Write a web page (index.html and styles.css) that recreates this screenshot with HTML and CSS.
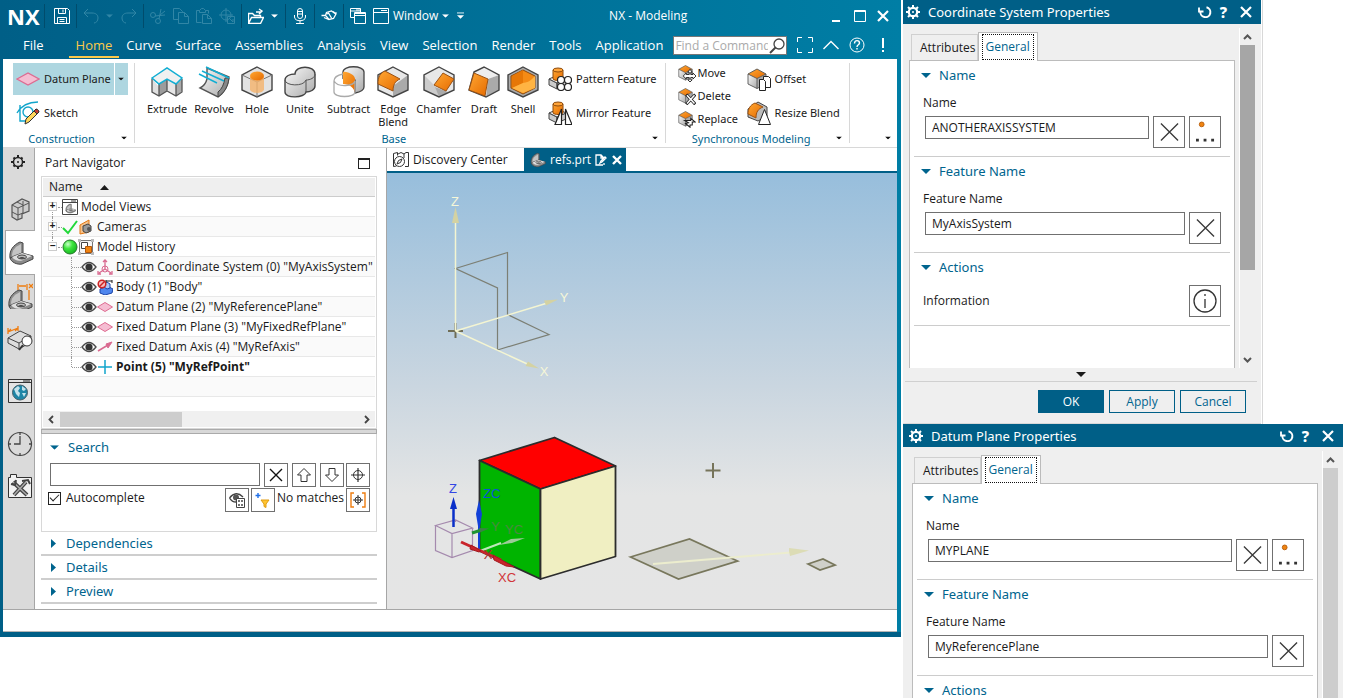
FILE: index.html
```html
<!DOCTYPE html>
<html lang="en">
<head>
<meta charset="utf-8">
<title>NX - Modeling</title>
<link rel="stylesheet" href="styles.css">
</head>
<body>
<svg class="sprite" aria-hidden="true">
  <defs>
    <linearGradient id="steel" x1="0" y1="0" x2="1" y2="1"><stop offset="0" stop-color="#fafafa"/><stop offset="1" stop-color="#a9a9a9"/></linearGradient>
    <linearGradient id="orange" x1="0" y1="0" x2="1" y2="1"><stop offset="0" stop-color="#ffa733"/><stop offset="1" stop-color="#e56a00"/></linearGradient>
    <radialGradient id="ball" cx=".35" cy=".3" r=".8"><stop offset="0" stop-color="#c9ffc9"/><stop offset=".4" stop-color="#3ee63e"/><stop offset="1" stop-color="#0fae1c"/></radialGradient>
  </defs>
  <symbol id="gear" viewBox="0 0 14 14"><path d="M7 0v14M0 7h14M2 2l10 10M12 2L2 12" stroke="currentColor" stroke-width="2"/><circle cx="7" cy="7" r="4.200" fill="var(--hub)" stroke="currentColor" stroke-width="2.200"/><circle cx="7" cy="7" r="1" fill="currentColor"/></symbol>
  <symbol id="reset" viewBox="0 0 14 14"><path d="M2.500 6A5 5 0 1 0 8.500 2.200" fill="none" stroke="currentColor" stroke-width="2"/><path d="M1 2.500v4h4.500" fill="none" stroke="currentColor" stroke-width="1.800"/></symbol>
  <symbol id="close" viewBox="0 0 12 12"><path d="M1 1l10 10M11 1L1 11" stroke="currentColor" stroke-width="2.200"/></symbol>
  <symbol id="cross" viewBox="0 0 20 20"><path d="M1 1l18 18M19 1L1 19" stroke="#3a3a3a" stroke-width="1.400"/></symbol>
  <symbol id="down" viewBox="0 0 8 4"><path d="M0 0h8L4 4z" fill="currentColor"/></symbol>
  <symbol id="open" viewBox="0 0 10 5"><path d="M0 0h10L5 5z" fill="currentColor"/></symbol>
  <symbol id="eye" viewBox="0 0 16 12"><path d="M1 6Q8-3 15 6 8 15 1 6z" fill="#fff" stroke="#4a4a4a" stroke-width="1.300"/><circle cx="8" cy="6" r="3.600" fill="#333"/></symbol>
  <symbol id="plane" viewBox="0 0 24 14"><path d="M1 7L12 1l11 6-11 6z" fill="#f5bdd2" stroke="#dd6b91" stroke-width="1.200"/></symbol>
  <symbol id="chev-up" viewBox="0 0 9 6"><path d="M1 5l3.500-3.500L8 5" fill="none" stroke="#555" stroke-width="2"/></symbol>
  <symbol id="chev-down" viewBox="0 0 9 6"><path d="M1 1l3.500 3.500L8 1" fill="none" stroke="#555" stroke-width="2"/></symbol>
  <symbol id="box" viewBox="0 0 24 24"><path d="M1 7l9 4.500v10L1 17z" fill="url(#steel)"/><path d="M19 7l-9 4.500v10l9-4.500z" fill="#aaa"/><path d="M1 7l9-5 9 5-9 4.500z" fill="url(#orange)"/><path d="M1 7v10l9 4.500 9-4.500V7l-9-5zM10 11.500v10M1 7l9 4.500L19 7" fill="none" stroke="#555" stroke-width=".9"/></symbol>
  <symbol id="boss" viewBox="0 0 24 24"><path d="M1 12l8 4v6l-8-4zM9 16l9-4v6l-9 4z" fill="#ccc" stroke="#444"/><path d="M1 12l9-4 8 4-9 4z" fill="#f3f3f3" stroke="#444"/><path d="M5 3v9c2 2 8 2 10 0V3z" fill="url(#orange)" stroke="#8d4a0c"/><ellipse cx="10" cy="3" rx="5" ry="2" fill="#ffa43a" stroke="#8d4a0c"/></symbol>
  <symbol id="bracket" viewBox="0 0 26 24"><path d="M2 17C1 10 5 4 12 1l3 1v11L4 19z" fill="#8d8d8d" stroke="#444"/><path d="M4 15C4 9 7 6 13 3v9z" fill="#c4c4c4"/><path d="M2 17l12-5 11 3v3l-11 5c-5 1-11-2-12-6z" fill="#8a8a8a" stroke="#444"/><path d="M4 16l10-4 10 3-10 4.500c-4 1-8-.5-10-3.500z" fill="#dedede"/><ellipse cx="14" cy="16" rx="4.500" ry="2" fill="#bbb" stroke="#444"/><path d="M11 17q3-2 6 0-3 1.500-6 0z" fill="#444"/></symbol>
  <symbol id="target" viewBox="0 0 16 16"><circle cx="8" cy="8" r="4.500" fill="none" stroke="#333"/><path d="M8 1v14M1 8h14" stroke="#333" stroke-width="1.200"/></symbol>
</svg>

<main class="desktop">
  <section class="app">
    <header class="titlebar">
      <strong class="logo">NX</strong>
      <div class="quick">
        <i class="sep"></i>
        <button class="qb save" aria-label="Save"><svg viewBox="0 0 16 16"><path d="M.5.5h13l2 2v13H.5zM4.500.5v5h7v-5M9 1.500v3M3.500 15.500v-6h9v6M5.500 11.500h5M5.500 13.500h5" /></svg></button>
        <i class="sep"></i>
        <button class="qb off" aria-label="Undo"><svg viewBox="0 0 16 16"><path d="M5 1L1 5l4 4M1 5h8c4 0 6 2 6 5s-2 5-4 5"/></svg></button>
        <button class="qc off" aria-label="Undo list"><svg viewBox="0 0 8 4"><use href="#down"/></svg></button>
        <button class="qb off" aria-label="Redo"><svg viewBox="0 0 16 16"><path d="M11 1l4 4-4 4M15 5H7c-4 0-6 2-6 5s2 5 4 5"/></svg></button>
        <i class="sep"></i>
        <button class="qb off" aria-label="Cut"><svg viewBox="0 0 16 16"><circle cx="3" cy="7" r="2.500"/><circle cx="8" cy="13" r="2.500"/><path d="M5 8l10-1M9 11l2-10M10 7l5-4"/></svg></button>
        <button class="qb off" aria-label="Copy"><svg viewBox="0 0 16 16"><path d="M5.500 11.500h-5V.5h6l3 3v1M5.500 4.500h6l4 4v7h-10zM11.500 4.500v4h4"/></svg></button>
        <button class="qb off" aria-label="Paste"><svg viewBox="0 0 16 16"><path d="M5.500 14.500h-5v-12h3m6 0h3v3M3.500 4.500v-2l2-2h2l2 2v2zM6.500 6.500h5l4 4v5h-9zM11.500 6.500v4h4"/></svg></button>
        <button class="qb off" aria-label="Move object"><svg viewBox="0 0 16 16"><circle cx="7" cy="7" r="5"/><path d="M7 0v14M0 7h14M8.500 8.500h7v7h-7zM10 10l4 4v-3"/></svg></button>
        <i class="sep"></i>
        <button class="qb" aria-label="Open"><svg viewBox="0 0 16 16"><path d="M.5 15.500v-10h4l2 2h6v2M.5 15.500l3-6h12l-3 6zM8 4h5l1-1M11 1l3 2-3 3" stroke-width="1.400"/></svg></button>
        <button class="qc" aria-label="Open list"><svg viewBox="0 0 8 4"><use href="#down"/></svg></button>
        <i class="sep"></i>
        <button class="qb" aria-label="Voice"><svg viewBox="0 0 16 16"><path d="M5.500 3v5a2.500 2.500 0 0 0 5 0V3a2.500 2.500 0 0 0-5 0zM5 3.500h6M5 6h6M2.500 7v2c0 5 11 5 11 0V7M8 12.500v3M4 15.500h8"/></svg></button>
        <i class="sep"></i>
        <button class="qb" aria-label="Touch"><svg viewBox="0 0 16 16"><path d="M.5 7.500h4l1-3 5-1.500 3.500 2.500 1.500-1M5 8l3 3.500 4.500-1L15 6l-3-2.500M3 9.500l4.500 2M7.500 5l3 5M6 6l2-1" stroke-width="1.300"/></svg></button>
        <i class="sep"></i>
        <button class="qb" aria-label="Switch window"><svg viewBox="0 0 16 16"><path d="M4.500 9.500h-4v-9h10v4M.5 3h10M4.500 4.500h11v11h-11zM4.500 7.500h11M5 5.500h10M6 2h4"/></svg></button>
        <button class="qb wide"><svg viewBox="0 0 16 16"><path d="M.5.5h15v15H.5zM.5 4.500h15M8 2.500h6"/></svg>Window</button>
        <button class="qc" aria-label="Window list"><svg viewBox="0 0 8 4"><use href="#down"/></svg></button>
        <button class="qc" aria-label="Customize"><svg viewBox="0 0 8 8" class="tall"><path d="M0 .5h8"/><path d="M0 3h8L4 7z" fill="currentColor" stroke="none"/></svg></button>
      </div>
      <h1 class="title">NX - Modeling</h1>
      <div class="winctl">
        <button aria-label="Minimize"><svg viewBox="0 0 12 12"><path d="M1 11h8" stroke-width="2"/></svg></button>
        <button aria-label="Maximize"><svg viewBox="0 0 12 12"><path d="M.5.5h11v11H.5zM.5 1.500h11"/></svg></button>
        <button aria-label="Close"><svg viewBox="0 0 12 12"><use href="#close"/></svg></button>
      </div>
    </header>

    <nav class="tabs">
      <a class="file" href="#file">File</a><a class="on" href="#home">Home</a><a href="#curve">Curve</a><a href="#surface">Surface</a><a href="#assemblies">Assemblies</a><a href="#analysis">Analysis</a><a href="#view">View</a><a href="#selection">Selection</a><a href="#render">Render</a><a href="#tools">Tools</a><a href="#application">Application</a>
      <div class="find"><input type="text" placeholder="Find a Command" aria-label="Find a Command"><svg viewBox="0 0 16 16"><circle cx="10" cy="6" r="5" fill="none" stroke="#444" stroke-width="1.300"/><path d="M6.500 9.500L1 15" stroke="#444" stroke-width="2"/></svg></div>
      <div class="tabctl">
        <button aria-label="Full screen"><svg viewBox="0 0 16 16"><path d="M.5 5V.5H5m6 0h4.500V5m0 6v4.500H11m-6 0H.500V11"/></svg></button>
        <button aria-label="Collapse ribbon"><svg viewBox="0 0 16 16"><path d="M.5 12L8 4.500l7.500 7.500" stroke-width="1.400"/></svg></button>
        <button aria-label="Help"><svg viewBox="0 0 16 16"><circle cx="8" cy="8" r="7"/><path d="M5.500 6.500c0-4 5-3.500 5-.5 0 2-2.500 1.500-2.500 4M8 11v1.500" stroke-width="1.400"/></svg></button>
        <button aria-label="Alerts"><svg viewBox="0 0 16 16"><path d="M8 1v10M8 13v2" stroke-width="2"/></svg></button>
      </div>
    </nav>

    <div class="ribbon">
      <section class="group construction">
        <div class="body col">
          <div class="split"><button class="tool"><svg viewBox="0 0 24 14" class="i24"><use href="#plane"/></svg>Datum Plane</button><button class="arrow" aria-label="Datum Plane list"><svg viewBox="0 0 8 4"><use href="#down"/></svg></button></div>
          <button class="tool"><svg viewBox="0 0 24 24" class="i24"><path d="M1 12C5 5 12 1 22 1M4 4v16h9" fill="none" stroke="#12a5cb" stroke-width="1.400"/><circle cx="12" cy="11" r="5" fill="none" stroke="#12a5cb" stroke-width="1.400"/><path d="M9 23l1-5L20 8l3 3-10 10z" fill="#ffd75a" stroke="#333"/><path d="M18 10l2-2c2 0 3 2 3 3l-2 2z" fill="#c43c31" stroke="#333"/></svg>Sketch</button>
        </div>
        <footer><span>Construction</span><svg viewBox="0 0 8 4" class="dd"><use href="#down"/></svg></footer>
      </section>
      <section class="group base">
        <div class="body">
          <button class="big"><svg viewBox="0 0 32 32"><path d="M1 13v13l7 4 8-5v-7L9 22z" fill="#e0e0e0"/><path d="M8 17v13l8-5V13z" fill="#9c9c9c"/><path d="M16 13v12l9 5V18z" fill="#e6e6e6"/><path d="M25 18l6-5v12l-6 5z" fill="#aaa"/><path d="M1 12L16 2l15 10-6 6-9-5-8 5z" fill="#f1f1f1"/><path d="M1 13v13l7 4 8-5 9 5 6-4V13M8 18v12M16 14v11M25 18v12" fill="none" stroke="#555" stroke-width="1.300"/><path d="M1 12L16 2l15 10-6 6-9-5-8 5z" fill="none" stroke="#12aed3" stroke-width="1.500"/></svg>Extrude</button>
          <button class="big"><svg viewBox="0 0 32 32"><path d="M9 2L31 11c-1 9-5 16-11 20L2 22c4-2 6-5 7-9z" fill="url(#steel)" stroke="#555" stroke-width="1.400"/><path d="M31 12c-1 9-5 15-11 19v-5c4-3 6-8 7-14z" fill="#888" stroke="#444"/><path d="M8 1l23 11M4 5l22 10M1 8l18 9" stroke="#12aed3" stroke-width="1.500"/></svg>Revolve</button>
          <button class="big"><svg viewBox="0 0 32 32"><path d="M16 1l15 8v15l-15 7-15-7V9z" fill="#e2e2e2" stroke="#444" stroke-width="1.400"/><path d="M1 9l15 7 15-7M16 16v15" fill="none" stroke="#777"/><path d="M9 11v13c3 4 11 4 14 0V11z" fill="#f5b36c" opacity=".8"/><ellipse cx="16" cy="10" rx="7" ry="4.500" fill="url(#orange)"/></svg>Hole</button>
          <button class="big s40"><svg viewBox="0 0 32 32"><path d="M11 8c0-9 20-9 20 0v12c0 4-5 6-9 6-1 6-21 7-21 0V14c0-4 5-6 10-6z" fill="url(#steel)" stroke="#444" stroke-width="1.400"/><path d="M1 14c0 6 19 7 21 0 4 0 9-2 9-6M22 14v12" fill="none" stroke="#555"/></svg>Unite</button>
          <button class="big"><svg viewBox="0 0 32 32"><path d="M10 6c0-7 21-7 21 0v15c0 3-4 5-9 6V14c-3-3-9-4-12-2z" fill="url(#steel)" stroke="#444" stroke-width="1.300"/><path d="M10 6c4-1 13 3 12 8v13C21 22 17 18 10 18z" fill="url(#orange)"/><path d="M10 8c-5 1-9 3-9 7v11c0 6 21 6 21 0V15c-1 5-17 7-21 0" fill="none" stroke="#aaa" stroke-width="1.300"/></svg>Subtract</button>
          <button class="big"><svg viewBox="0 0 32 32"><path d="M16 1l15 8v15l-15 7-15-7V9z" fill="#e8e8e8"/><path d="M16 31V20l15-11v15z" fill="#aaa"/><path d="M16 1l15 8v15l-15 7-15-7V9z" fill="none" stroke="#444" stroke-width="1.400"/><path d="M8 5l15 8c-5 2-7 6-7 12L1 18C1 11 3 7 8 5z" fill="url(#orange)" stroke="#9b5112"/></svg>Edge<br>Blend</button>
          <button class="big s40"><svg viewBox="0 0 32 32"><path d="M16 1l15 8v15l-15 7-15-7V9z" fill="#e8e8e8"/><path d="M1 9l11 11 4 11-15-7z" fill="#ccc"/><path d="M16 31l-4-10 13 5z" fill="#aaa"/><path d="M16 1l15 8v15l-15 7-15-7V9z" fill="none" stroke="#444" stroke-width="1.400"/><path d="M20 7l11 6-8 12-12-6z" fill="url(#orange)" stroke="#9b5112"/></svg>Chamfer</button>
          <button class="big"><svg viewBox="0 0 32 32"><path d="M6 6l10-5 15 8-11 4z" fill="#eee"/><path d="M20 13l11-4v15l-13 7z" fill="#aaa"/><path d="M6 6l10-5 15 8v15l-13 7-17-7z" fill="none" stroke="#444" stroke-width="1.400"/><path d="M6 7l14 6-3 17-16-6z" fill="url(#orange)" stroke="#9b5112"/></svg>Draft</button>
          <button class="big"><svg viewBox="0 0 32 32"><path d="M16 1l15 8v15l-15 7-15-7V9z" fill="#aaa" stroke="#444" stroke-width="1.400"/><path d="M16 4l12 6v12l-12 6-12-6V10z" fill="#f58b15" stroke="#8d4a0c"/><path d="M16 4v13l-11 5V10z" fill="#e67706"/><path d="M16 17c7-1 9-4 12-7v12l-12 5-11-5z" fill="#ffb443"/></svg>Shell</button>
          <div class="stack">
            <button class="tool"><svg viewBox="0 0 24 24" class="i24"><use href="#boss"/><g fill="#fff" stroke="#222" stroke-width="1.200"><circle cx="13" cy="13" r="3.500"/><circle cx="20" cy="13" r="3.500"/><circle cx="13" cy="20" r="3.500"/><circle cx="20" cy="20" r="3.500"/></g></svg>Pattern Feature</button>
            <button class="tool"><svg viewBox="0 0 24 24" class="i24"><use href="#boss"/><path d="M13.500 8v15.500H7zM17.500 8v15.500H24z" fill="#fff" stroke="#222" stroke-width="1.200"/></svg>Mirror Feature</button>
          </div>
        </div>
        <footer><span>Base</span><svg viewBox="0 0 8 4" class="dd"><use href="#down"/></svg></footer>
      </section>
      <section class="group sync">
        <div class="body">
          <div class="stack three">
            <button class="tool"><svg viewBox="0 0 24 24" class="i18"><use href="#box"/><path d="M16 7l3 4h-2v3h3v-2l4 4-4 4v-2h-3v3h2l-3 3-3-3h2v-3h-4v2l-4-4 4-4v2h4v-3h-2z" fill="#fff" stroke="#222" stroke-width="1.200"/></svg>Move</button>
            <button class="tool"><svg viewBox="0 0 24 24" class="i18"><use href="#box"/><path d="M11 10l12 13M23 10L11 23" stroke="#222" stroke-width="4"/><path d="M12 11l10 11M22 11L12 22" stroke="#fff" stroke-width="2"/></svg>Delete</button>
            <button class="tool"><svg viewBox="0 0 24 24" class="i18"><use href="#box"/><path d="M9 14h8v-3l6 5h-4v4h-3v3l-6-5 4-1z" fill="#fff" stroke="#222" stroke-width="1.400"/></svg>Replace</button>
          </div>
          <div class="stack">
            <button class="tool"><svg viewBox="0 0 24 24" class="i24"><use href="#box"/><path d="M12.500 23.500v-11h4l2 2v9zM16.500 12.500v-3h5l2 2v9h-5" fill="#fff" stroke="#222"/></svg>Offset</button>
            <button class="tool"><svg viewBox="0 0 24 24" class="i24"><path d="M1 8l10-7 9 5v9l-9 5-10-4z" fill="#bbb" stroke="#444"/><path d="M8 2l8 4c-5 2-7 5-7 11L1 13C1 8 3 4 8 2z" fill="url(#orange)" stroke="#9b5112"/><path d="M17.500 8.500l6 15h-12z" fill="#fff" stroke="#222"/></svg>Resize Blend</button>
          </div>
        </div>
        <footer><span>Synchronous Modeling</span><svg viewBox="0 0 8 4" class="dd"><use href="#down"/></svg></footer>
      </section>
      <section class="group rest"><footer><svg viewBox="0 0 8 4" class="dd"><use href="#down"/></svg></footer></section>
    </div>

    <div class="work">
      <aside class="rail">
        <button class="short" aria-label="Settings"><svg viewBox="0 0 14 14" class="cog"><path d="M7 0v3M7 11v3M0 7h3M11 7h3M2.500 2.500l2 2M9.500 9.500l2 2M11.500 2.500l-2 2M4.500 9.500l-2 2" stroke="#222" stroke-width="2"/><circle cx="7" cy="7" r="4.500" fill="#dadada" stroke="#222" stroke-width="1.500"/><circle cx="7" cy="7" r="1" fill="#222"/></svg></button>
        <button class="gap" aria-label="Assembly Navigator"><svg viewBox="0 0 26 26"><path d="M5 9l10-6 7 3v9l-7 3v4l-5 2-5-3z" fill="#ccc" stroke="#555" stroke-width="1.200"/><path d="M5 9l6 3 11-5M11 12v12M5 16l6 3 5-2M16 5v13M10 6l6 3" fill="none" stroke="#555"/></svg></button>
        <button class="on" aria-label="Part Navigator"><svg viewBox="0 0 26 24"><use href="#bracket"/></svg></button>
        <button aria-label="PMI"><svg viewBox="0 0 26 26"><svg y="5" width="24" height="21" viewBox="0 0 26 24"><use href="#bracket"/></svg><path d="M11 1v6M12 3h7M20 1v6M22 1l4 4M26 1l-4 4M22 7v10" stroke="#ee7d11" stroke-width="1.300"/></svg></button>
        <button aria-label="Feature check"><svg viewBox="0 0 26 26"><path d="M1 13l12-7 11 5v6l-12 7-11-6z" fill="#ddd" stroke="#444"/><path d="M1 13l11 5 12-7M12 18v6" fill="none" stroke="#444"/><path d="M1 9V3m0 4l10-4m0-2v5M1 7l3-3M11 3L8 6" fill="none" stroke="#ee7d11" stroke-width="1.300"/><circle cx="20" cy="16" r="5" fill="#fff" stroke="#333"/><path d="M16 20l-4 5" stroke="#333" stroke-width="2"/></svg></button>
        <button class="gap" aria-label="Web browser"><svg viewBox="0 0 26 26"><path d="M1.500 1.500h23v23h-23zM1.500 4.500h23M16 3h7" fill="#e4e4e4" stroke="#333"/><circle cx="13" cy="14.500" r="7.500" fill="#1d85a6" stroke="#46606b"/><path d="M7 11l4-3 2 2-2 3 2 2-1 4-3-3zM15 8l4 3-2 2-2-1zM15 15l4 0-2 4z" fill="#c4e3ec"/></svg></button>
        <button class="gap" aria-label="History"><svg viewBox="0 0 26 26"><circle cx="13" cy="13" r="11.500" fill="none" stroke="#444" stroke-width="1.200"/><path d="M13 5v8H7M13 1v3M13 22v3M1 13h3M22 13h3" fill="none" stroke="#444" stroke-width="1.300"/></svg></button>
        <button aria-label="Roles"><svg viewBox="0 0 26 26"><path d="M1.500 4.500h2v-3h6v3h15v20h-23z" fill="#f2f2f2" stroke="#333"/><path d="M6 9l14 13M19 9L7 22" stroke="#444" stroke-width="4"/><path d="M6 9l14 13M19 9L7 22" stroke="#aaa" stroke-width="1.500"/><path d="M4 11l4 1 1-5M15 8l6-1 2 4" fill="none" stroke="#444" stroke-width="2"/></svg></button>
      </aside>

      <section class="navigator">
        <header><h2>Part Navigator</h2><button aria-label="Maximize panel" class="max"></button></header>
        <div class="tree">
          <div class="thead">Name<svg viewBox="0 0 9 5"><path d="M0 5h9L4.500 0z" fill="#1a1a1a"/></svg></div>
          <ul>
            <li class="root first"><button class="exp" aria-label="Expand">+</button><svg viewBox="0 0 16 16" class="i16"><path d="M.5.5h15v15H.5zM.5 3.500h15M9 2h5" fill="#fff" stroke="#444"/><svg x="3" y="4" width="11" height="11" viewBox="0 0 26 24"><use href="#bracket"/></svg></svg><span>Model Views</span></li>
            <li class="root"><button class="exp" aria-label="Expand">+</button><svg viewBox="0 0 16 16" class="i16"><path d="M1 9l5 5L15 2" fill="none" stroke="#22d83a" stroke-width="2"/></svg><svg viewBox="0 0 16 16" class="i16"><path d="M2 6l9-5v12l-9 2z" fill="#f6c28b" stroke="#e2760f"/><path d="M5 7l5-2 3 2v5l-5 2-3-2z" fill="#999" stroke="#444"/><circle cx="11" cy="10" r="2" fill="#555"/></svg><span>Cameras</span></li>
            <li class="root last"><button class="exp" aria-label="Collapse">−</button><svg viewBox="0 0 16 16" class="i16"><circle cx="8" cy="8" r="7" fill="url(#ball)" stroke="#257a2a"/></svg><svg viewBox="0 0 16 16" class="i16"><path d="M1.500 1.500h13v13h-13z" fill="#f5f5f5" stroke="#777"/><path d="M0 0h3v3H0zM13 0h3v3h-3zM0 13h3v3H0zM13 13h3v3h-3z" fill="#bbb"/><path d="M3.500 3.500h6v6h-6z" fill="#fff" stroke="#444"/><path d="M7.500 7.500h6v6h-6z" fill="#f0830f" stroke="#b4570a"/></svg><span>Model History</span></li>
            <li class="leaf"><svg viewBox="0 0 16 12" class="i16"><use href="#eye"/></svg><svg viewBox="0 0 16 16" class="i16"><path d="M8 10V2M8 10l-6 4M8 10l6 4M6 3l2-2 2 2M1 12v3h3M15 12v3h-3" fill="none" stroke="#d96a90" stroke-width="1.300"/><circle cx="8" cy="10" r="3" fill="none" stroke="#d96a90"/></svg><span>Datum Coordinate System (0) "MyAxisSystem"</span></li>
            <li class="leaf"><svg viewBox="0 0 16 12" class="i16"><use href="#eye"/></svg><svg viewBox="0 0 16 16" class="i16"><path d="M3 10l7-3 6 3-1 4-7 2-5-2z" fill="#4f86ee" stroke="#1c45a8"/><path d="M7 8V4l3-1 3 2v4l-3 1z" fill="#aac6f7" stroke="#1c45a8"/><path d="M9 1v3M15 1v3M9 2h6" stroke="#222"/><circle cx="5" cy="5" r="3.800" fill="#f6bcbc" stroke="#cc2222" stroke-width="1.500"/><path d="M2.500 7.500l5-5" stroke="#cc2222" stroke-width="1.500"/></svg><span>Body (1) "Body"</span></li>
            <li class="leaf"><svg viewBox="0 0 16 12" class="i16"><use href="#eye"/></svg><svg viewBox="0 0 16 16" class="i16"><path d="M.5 8L8 3.500 15.500 8 8 12.500z" fill="#f5bdd2" stroke="#dd6b91"/></svg><span>Datum Plane (2) "MyReferencePlane"</span></li>
            <li class="leaf"><svg viewBox="0 0 16 12" class="i16"><use href="#eye"/></svg><svg viewBox="0 0 16 16" class="i16"><path d="M.5 8L8 3.500 15.500 8 8 12.500z" fill="#f5bdd2" stroke="#dd6b91"/></svg><span>Fixed Datum Plane (3) "MyFixedRefPlane"</span></li>
            <li class="leaf"><svg viewBox="0 0 16 12" class="i16"><use href="#eye"/></svg><svg viewBox="0 0 16 16" class="i16"><path d="M1 12l10-6" stroke="#d96a90" stroke-width="1.500"/><path d="M15 3L9 5l2 4z" fill="#d96a90" stroke="#d96a90"/></svg><span>Fixed Datum Axis (4) "MyRefAxis"</span></li>
            <li class="leaf end"><svg viewBox="0 0 16 12" class="i16"><use href="#eye"/></svg><svg viewBox="0 0 16 16" class="i16"><path d="M8 1v14M1 8h14" stroke="#12a5cb" stroke-width="1.500"/></svg><b>Point (5) "MyRefPoint"</b></li>
            <li></li>
          </ul>
          <div class="hscroll"><svg viewBox="0 0 6 9"><path d="M5 1L1.500 4.500 5 8" fill="none" stroke="#444" stroke-width="1.800"/></svg><div class="htrack"><i class="hthumb"></i></div><svg viewBox="0 0 6 9"><path d="M1 1l3.500 3.500L1 8" fill="none" stroke="#444" stroke-width="1.800"/></svg></div>
        </div>
        <div class="splitter"></div>
        <section class="search">
          <h3><svg viewBox="0 0 10 5"><use href="#open"/></svg>Search</h3>
          <div class="row"><input type="text" class="term" aria-label="Search"><button class="sq sp" aria-label="Clear"><svg viewBox="0 0 16 16"><path d="M2 2l12 12M14 2L2 14" stroke="#111" stroke-width="1.400"/></svg></button><button class="sq sp" aria-label="Previous"><svg viewBox="0 0 16 16"><path d="M8 1.500L1.500 8H5v6.500h6V8h3.500z" fill="#fff" stroke="#333"/></svg></button><button class="sq" aria-label="Next"><svg viewBox="0 0 16 16"><path d="M8 14.500L1.500 8H5V1.500h6V8h3.500z" fill="#fff" stroke="#333"/></svg></button><button class="sq" aria-label="Locate"><svg viewBox="0 0 16 16"><use href="#target"/></svg></button></div>
          <div class="row two"><label class="check"><input type="checkbox" checked>Autocomplete</label><button class="sq" aria-label="Columns"><svg viewBox="0 0 16 16"><path d="M.5 6Q7-2 14 5M.5 6Q3 10 7 10" fill="none" stroke="#444" stroke-width="1.300"/><circle cx="7" cy="5.500" r="3" fill="#555"/><path d="M7.500 6.500h8v9h-8z" fill="#fff" stroke="#444"/><path d="M9 9h2M12 9h2M9 13h2M12 13h2" stroke="#444" stroke-width="1.400"/></svg></button><button class="sq" aria-label="Add filter"><svg viewBox="0 0 16 16"><path d="M3 1v5M.5 3.500h5" stroke="#1f6fe8" stroke-width="1.400"/><path d="M6 8h8l-3 4v3.500l-2-1V12z" fill="#ffc531" stroke="#df9b12"/></svg></button><span class="none">No matches</span><button class="sq" aria-label="Locate all"><svg viewBox="0 0 16 16"><circle cx="8" cy="8" r="3" fill="none" stroke="#333"/><path d="M8 3v10M3 8h10" stroke="#333"/><path d="M4 1H1v14h3M12 1h3v14h-3" fill="none" stroke="#ee7d11" stroke-width="1.400"/></svg></button></div>
        </section>
        <button class="fold"><svg viewBox="0 0 5 9"><path d="M0 0v9l5-4.500z" fill="currentColor"/></svg>Dependencies</button>
        <button class="fold"><svg viewBox="0 0 5 9"><path d="M0 0v9l5-4.500z" fill="currentColor"/></svg>Details</button>
        <button class="fold"><svg viewBox="0 0 5 9"><path d="M0 0v9l5-4.500z" fill="currentColor"/></svg>Preview</button>
      </section>

      <section class="stage">
        <div class="doctabs">
          <button class="doc first"><svg viewBox="0 0 16 16"><path d="M.5 1.500l4-1v3M.5 1.500v13l3-.500M5 2l3-1.500L11 2v4M11 2l2-1.500h2.500v14H12" fill="none" stroke="#333"/><circle cx="6.500" cy="9.500" r="5" fill="#fff" stroke="#333"/><path d="M9 7l-1.500 3.500L4 12l1.500-3.500z" fill="none" stroke="#333"/></svg>Discovery Center</button>
          <div class="doc on"><svg viewBox="0 0 26 24"><use href="#bracket"/></svg><span>refs.prt</span><svg viewBox="0 0 12 12" class="small"><path d="M8 11H1V1h5l3 3M6 1v3h3M5 9l1-2 4-4 1 1-4 4zM9 9v2" fill="none" stroke="#fff" stroke-width="1.300"/></svg><button aria-label="Close refs.prt"><svg viewBox="0 0 12 12" class="small"><path d="M2 2l8 8M10 2l-8 8" stroke="#fff" stroke-width="2.400"/></svg></button></div>
        </div>
        <div class="view">
          <svg class="scene" viewBox="0 0 510 436" preserveAspectRatio="xMinYMin meet">
            <path d="M68.500 95.500l52-16v62l41.500 20-51.500 15.500v-62z" fill="none" stroke="#7c7f74" stroke-width="1.200"/>
            <path d="M61 158h15M68.500 150v15" stroke="#6f6d55" stroke-width="2"/>
            <path d="M68.500 158V48M68.500 158l92-28M68.500 158l74 34" fill="none" stroke="#f4f5d2" stroke-width="1.500"/>
            <path d="M68.500 34l-3.500 16h7zM171 126.500l-14 1 2 5zM152 195.500l-13.500-2.500 2.500-4.500z" fill="#d4d2a2"/>
            <g class="axis" fill="#f6f7d8"><text x="68" y="33">Z</text><text x="177" y="129">Y</text><text x="157" y="203">X</text></g>
            <path d="M318.500 297.500h15M326 290v15" stroke="#76745a" stroke-width="2"/>
            <g stroke="#2c2c2c" stroke-width="1.800" stroke-linejoin="round">
              <path d="M167.500 264.500l61 28.500-75 23-61-28.500z" fill="#f00"/>
              <path d="M92.500 287.500l61 28.500v90l-61-28z" fill="#00b400"/>
              <path d="M153.500 316l75-23v90.500l-75 22.500z" fill="#f0efc2"/>
            </g>
            <g fill="none" stroke="#a58aae" stroke-width="1.200"><path d="M48.500 352.500l20-5.500 17 8-20.500 5.500zM48.500 352.500v25l16.500 7 20.500-7v-22M65 360.500v24M68.500 347v2"/></g>
            <path d="M66.500 354v-22" stroke="#0a2fc9" stroke-width="2.500"/><path d="M66.500 324l-3.500 12h7z" fill="#0a2fc9"/>
            <path d="M92 378V350" stroke="#1240d8" stroke-width="2"/><path d="M92 327l-3 14 2 12h2l2-12z" fill="#1240d8"/>
            <path d="M85 360l8-2.500" stroke="#1f9431" stroke-width="3"/><path d="M92 355l10 .500-9 4z" fill="#3b8145"/>
            <path d="M93 378l21-8" stroke="#bde8b9" stroke-width="2"/><path d="M138 365l-13 5-13 2 12-6z" fill="#9ccb98"/>
            <path d="M74 369l40 18" stroke="#c9242b" stroke-width="3"/><path d="M84 372l10 6-2 1-9-3zM106 382l21 12-8-1-12-6z" fill="#c9242b" stroke="#a31a20"/>
            <g class="axis"><text x="66" y="320" fill="#3346e4">Z</text><text x="105" y="325" fill="#0a52dc">ZC</text><text x="108.500" y="358" fill="#4b8a40">Y</text><text x="127" y="361" fill="#4b8a40">YC</text><text x="101" y="386" fill="#a8302c">X</text><text x="120" y="409" fill="#d1353a">XC</text></g>
            <g fill="#cfd0c9" stroke="#78775c" stroke-width="1.800"><path d="M243.500 384l59-18 48 22-59 18z"/><path d="M421 391l15-5 12 6-15 5z"/></g>
            <path d="M266 391l138-11.500" stroke="#ecedce" stroke-width="1.800"/><path d="M422 377.500l-20-2.500v3l1 5z" fill="#dcdcb5"/>
          </svg>
        </div>
      </section>
    </div>
    <footer class="status"></footer>
  </section>

  <div class="dialogs">
    <section class="dialog first">
      <header><svg viewBox="0 0 14 14"><use href="#gear"/></svg><h2>Coordinate System Properties</h2><button aria-label="Reset"><svg viewBox="0 0 14 14"><use href="#reset"/></svg></button><button class="help" aria-label="Help">?</button><button aria-label="Close"><svg viewBox="0 0 12 12"><use href="#close"/></svg></button></header>
      <div class="content">
        <div class="pane">
          <div class="ptabs"><button>Attributes</button><button class="on"><span>General</span></button></div>
          <div class="sheet">
            <section>
              <h3><svg viewBox="0 0 10 5"><use href="#open"/></svg>Name</h3>
              <label for="cs-name">Name</label>
              <div class="field"><input id="cs-name" type="text" value="ANOTHERAXISSYSTEM"><button aria-label="Clear name"><svg viewBox="0 0 20 20"><use href="#cross"/></svg></button><button aria-label="Choose name"><svg viewBox="0 0 20 24"><circle cx="6" cy="4" r="2.500" fill="#f08410" stroke="#b85f0c"/><path d="M0 19h3v3H0zM8 19h3v3H8zM16 19h3v3h-3z" fill="#333"/></svg></button></div>
            </section>
            <section>
              <h3><svg viewBox="0 0 10 5"><use href="#open"/></svg>Feature Name</h3>
              <label for="cs-feature">Feature Name</label>
              <div class="field"><input id="cs-feature" type="text" value="MyAxisSystem"><button aria-label="Clear feature name"><svg viewBox="0 0 20 20"><use href="#cross"/></svg></button></div>
            </section>
            <section>
              <h3><svg viewBox="0 0 10 5"><use href="#open"/></svg>Actions</h3>
              <div class="field info"><label for="cs-info">Information</label><button id="cs-info" aria-label="Information"><svg viewBox="0 0 24 24" class="full"><circle cx="12" cy="12" r="11" fill="none" stroke="#333" stroke-width="1.300"/><path d="M12 10v9M12 5v2" stroke="#333" stroke-width="1.300"/></svg></button></div>
            </section>
          </div>
        </div>
        <div class="vscroll"><svg viewBox="0 0 9 6"><use href="#chev-up"/></svg><i class="vthumb"></i><svg viewBox="0 0 9 6"><use href="#chev-down"/></svg></div>
      </div>
      <div class="more"><svg viewBox="0 0 10 5"><use href="#open"/></svg></div>
      <footer><button class="primary">OK</button><button>Apply</button><button>Cancel</button></footer>
    </section>

    <section class="dialog second">
      <header><svg viewBox="0 0 14 14"><use href="#gear"/></svg><h2>Datum Plane Properties</h2><button aria-label="Reset"><svg viewBox="0 0 14 14"><use href="#reset"/></svg></button><button class="help" aria-label="Help">?</button><button aria-label="Close"><svg viewBox="0 0 12 12"><use href="#close"/></svg></button></header>
      <div class="content">
        <div class="pane">
          <div class="ptabs"><button>Attributes</button><button class="on"><span>General</span></button></div>
          <div class="sheet">
            <section>
              <h3><svg viewBox="0 0 10 5"><use href="#open"/></svg>Name</h3>
              <label for="dp-name">Name</label>
              <div class="field"><input id="dp-name" type="text" value="MYPLANE"><button aria-label="Clear name"><svg viewBox="0 0 20 20"><use href="#cross"/></svg></button><button aria-label="Choose name"><svg viewBox="0 0 20 24"><circle cx="6" cy="4" r="2.500" fill="#f08410" stroke="#b85f0c"/><path d="M0 19h3v3H0zM8 19h3v3H8zM16 19h3v3h-3z" fill="#333"/></svg></button></div>
            </section>
            <section>
              <h3><svg viewBox="0 0 10 5"><use href="#open"/></svg>Feature Name</h3>
              <label for="dp-feature">Feature Name</label>
              <div class="field"><input id="dp-feature" type="text" value="MyReferencePlane"><button aria-label="Clear feature name"><svg viewBox="0 0 20 20"><use href="#cross"/></svg></button></div>
            </section>
            <section>
              <h3><svg viewBox="0 0 10 5"><use href="#open"/></svg>Actions</h3>
            </section>
          </div>
        </div>
        <div class="vscroll"><svg viewBox="0 0 9 6"><use href="#chev-up"/></svg><i class="vthumb"></i></div>
      </div>
    </section>
  </div>
</main>
</body>
</html>
```
FILE: styles.css
```css
:root {
  --deep: #005f87;
  --link: #00648e;
  --line: #d8d8d8;
  --edge: #a6a6a6;
  --ink: #1a1a1a;
}
* { box-sizing: border-box; }
body {
  margin: 0;
  height: 100vh;
  overflow: hidden;
  background: #fff;
  color: var(--ink);
  font: 12px/16px "Open Sans", "Noto Sans", sans-serif;
}
button, input { font: inherit; color: inherit; }
button { margin: 0; padding: 0; border: 0; background: none; }
svg { display: block; flex: none; }
h1, h2, h3, ul { margin: 0; padding: 0; font-weight: 400; }
.sprite { position: absolute; width: 0; height: 0; }
.desktop { display: grid; grid-template-columns: minmax(0, 1fr) 440px; gap: 2px; padding-right: 4px; height: 100%; align-items: start; }

/* application window */
.app { background: linear-gradient(90deg, #005f87, #007ea5); padding: 0 4px 0 3px; border-bottom: 5px solid var(--deep); }
.titlebar { display: flex; align-items: center; height: 31px; color: #fff; padding-left: 4px; }
.logo { font: 700 22px/30px "Open Sans", sans-serif; width: 38px; }
.quick { display: flex; align-items: center; gap: 7px; }
.sep { width: 1px; height: 24px; margin: 0 -1px; background: #004c6c; }
.quick svg { width: 16px; height: 16px; fill: none; stroke: currentColor; }
.save { margin-left: 3px; }
.quick .off { color: #3186a6; }
.quick .qc svg { width: 8px; height: 4px; padding-right: 1px; stroke: none; }
.quick .qc svg.tall { height: 8px; width: 8px; stroke: currentColor; }
.qb.wide { display: flex; align-items: center; gap: 4px; }
.qb.wide + .qc { margin-left: -3px; }
.title { flex: 1; text-align: center; font-size: 12px; }
.winctl { display: flex; gap: 11px; padding-right: 8px; }
.winctl svg { width: 12px; height: 12px; fill: none; stroke: #fff; }
.tabs { display: flex; align-items: center; height: 28px; color: #fff; font-size: 13px; }
.tabs a { color: inherit; text-decoration: none; padding: 2px 7px 0; line-height: 22px; border-bottom: 2px solid transparent; }
.tabs .file { margin: 0 18px 0 13px; }
.tabs .on { color: #fbc94b; border-color: #fbc94b; }
.find { display: flex; align-items: center; flex: 1; min-width: 60px; height: 19px; margin: 1px 0 0 3px; background: #fff; border: 1px solid #777; }
.find input { flex: 1; min-width: 0; padding: 0 1px; border: 0; font-size: 12px; background: none; color: #333; }
.find input::placeholder { color: #aaa; }
.find svg { width: 16px; height: 16px; margin-right: 1px; }
.tabctl { display: flex; gap: 10px; padding: 0 6px 0 10px; }
.tabctl svg { width: 16px; height: 16px; fill: none; stroke: #fff; }

/* ribbon */
.ribbon { display: flex; background: #fff; padding: 4px 0; height: 89px; border-bottom: 1px solid var(--line); font-family: "Noto Sans", sans-serif; font-size: 11px; }
.group { display: flex; flex-direction: column; border-right: 1px solid var(--line); }
.group .body { flex: 1; display: flex; }
.group .col { flex-direction: column; gap: 2px; }
.group footer { position: relative; display: flex; justify-content: center; align-items: center; height: 8px; color: var(--link); }
.dd { position: absolute; right: 7px; top: 1px; width: 6px; height: 4px; color: #111; }
.construction { width: 132px; padding-left: 10px; }
.construction footer { padding-right: 24px; }
.tool { display: flex; align-items: center; gap: 4px; height: 32px; padding: 0 3px; white-space: nowrap; }
.i24 { width: 24px; height: 24px; }
.i18 { width: 18px; height: 18px; }
.split { display: flex; width: 115px; background: #aed6e0; }
.split .tool { flex: 1; }
.split .arrow { width: 15px; border-left: 1px solid #fff; }
.split .arrow svg { width: 6px; height: 4px; margin: auto; }
.base { padding-left: 12px; }
.base .body { gap: 7px; }
.base footer { padding-right: 24px; }
.big { display: block; align-self: flex-start; min-width: 32px; padding-top: 3px; line-height: 13px; text-align: center; }
.big svg { width: 32px; height: 32px; margin: 0 auto 4px; }
.s40 { min-width: 40px; }
.base .tool { padding: 0 8px 0 0; }
.stack { display: flex; flex-direction: column; gap: 2px; }
.base .stack { margin-left: 2px; }
.three { gap: 3px; width: 69px; }
.three .tool { height: 20px; padding: 0; gap: 2px; }
.sync { padding-left: 12px; }
.sync footer { padding-right: 24px; }
.sync .stack:last-child .tool { padding: 0 9px 0 0; }
.rest { flex: 1; border: 0; justify-content: flex-end; }
.rest .dd { right: 6px; }

/* work area */
.work { display: flex; background: #fff; border-bottom: 1px solid var(--edge); }
.rail { display: flex; flex-direction: column; width: 32px; padding-top: 1px; background: #dadada; border-right: 1px solid var(--edge); }
.rail button { height: 42px; display: grid; place-items: center; margin-left: 2px; }
.rail svg { width: 26px; height: 26px; }
.rail .short { height: 26px; }
.rail .cog { width: 14px; height: 14px; margin-right: 4px; }
.rail .gap { margin-top: 11px; }
.rail .short + .gap { margin-top: 13px; }
.rail .on { height: 45px; background: #fff; margin-right: -1px; border: 1px solid var(--edge); border-right: 0; }
.navigator { width: 352px; padding: 0 9px 5px 6px; border-right: 1px solid var(--edge); }
.navigator > header { display: flex; align-items: center; justify-content: space-between; height: 28px; padding: 2px 7px 0 4px; }
.navigator h2 { font-size: 12px; }
.max { width: 12px; height: 11px; border: 1px solid #222; border-top-width: 2px; }
.tree { padding: 1px; border: 1px solid var(--line); }
.thead { display: flex; align-items: center; gap: 17px; height: 19px; padding-left: 6px; background: #efefef; border-bottom: 1px solid #ccc; }
.thead svg { width: 9px; height: 5px; }
.tree ul { list-style: none; height: 214px; }
.tree li { position: relative; display: flex; align-items: center; height: 20px; border-bottom: 1px solid #e8e8e8; white-space: nowrap; }
.tree li:nth-child(even) { background: #fafafa; }
.i16 { width: 16px; height: 16px; }
.root { padding-left: 5px; }
.exp { width: 9px; height: 9px; margin-right: 5px; background: #fff; border: 1px solid #ccc; font: 700 10px/7px "Liberation Mono", monospace; z-index: 1; }
.tree span, .tree b { padding-left: 3px; }
.root::before, .leaf::before { content: ""; position: absolute; left: 9px; top: 0; height: 20px; border-left: 1px dotted #999; }
.root.first::before { top: 10px; height: 10px; }
.root.last::before, .leaf.end::before { height: 10px; }
.root::after, .leaf::after { content: ""; position: absolute; left: 15px; top: 10px; width: 4px; border-top: 1px dotted #999; }
.leaf { padding-left: 38px; }
.leaf::before { left: 28px; }
.leaf::after { left: 29px; width: 9px; }
.hscroll { display: flex; align-items: center; height: 16px; padding: 0 5px; gap: 6px; background: #f0f0f0; }
.hscroll svg { width: 6px; height: 9px; }
.htrack { flex: 1; height: 15px; }
.hthumb { display: block; width: 41%; height: 100%; background: #cdcdcd; }
.splitter { height: 5px; background: var(--line); border: 1px solid #aaa; }
.search { padding: 3px 6px 19px 8px; border: 1px solid var(--line); border-top: 0; }
.search h3, .fold, .sheet h3, .dialog > header { font-size: 13px; }
.search h3, .fold { display: flex; align-items: center; gap: 9px; color: var(--link); font-family: "Noto Sans", sans-serif; }
.search h3 { height: 20px; margin-bottom: 6px; }
.search h3 svg { width: 9px; height: 5px; }
.row { display: flex; align-items: flex-start; }
.two { margin-top: 1px; gap: 2px; }
.term { flex: 1; min-width: 0; height: 23px; margin-right: 4px; border: 1px solid #707070; }
.sq { width: 24px; height: 24px; margin-right: 2px; border: 1px solid #707070; background: #fff; }
.sq svg { width: 16px; height: 16px; margin: auto; }
.sq.sp { margin-right: 4px; }
.sq:last-child, .two .sq { margin-right: 0; }
.check { flex: 1; display: flex; align-items: center; gap: 5px; height: 20px; margin-left: -2px; }
.check input { appearance: none; width: 13px; height: 13px; margin: 0; border: 1px solid #222; display: grid; place-items: center; }
.check input::before { content: ""; width: 8px; height: 4px; border: solid #222; border-width: 0 0 1px 1px; rotate: -45deg; margin-bottom: 3px; }
.none { line-height: 20px; white-space: nowrap; }
.fold { width: 100%; height: 24px; padding-left: 10px; border-bottom: 2px solid #cecece; gap: 10px; }
.fold svg { width: 5px; height: 9px; }
.stage { flex: 1; min-width: 0; display: flex; flex-direction: column; }
.doctabs { display: flex; height: 25px; border-bottom: 2px solid var(--deep); }
.doc { display: flex; align-items: center; gap: 4px; padding: 0 6px; white-space: nowrap; }
.doc.first { width: 137px; }
.doc svg { width: 16px; height: 16px; }
.doc .small { width: 12px; height: 12px; }
.doc.on { background: var(--deep); color: #fff; padding-right: 3px; }
.view { flex: 1; background: linear-gradient(#97bedc, #cad6e0 49%, #e4e5e5 74%, #e5e5e5); }
.scene { width: 100%; height: auto; }
.axis { font: 13px "Liberation Sans", sans-serif; text-anchor: middle; }
.status { height: 22px; background: #fff; border-bottom: 1px solid #b5b5b5; }

/* property dialogs */
.dialogs { display: flex; flex-direction: column; min-width: 0; height: 100vh; }
.dialog { background: #efefef; }
.dialog.first { width: 358px; flex: none; box-shadow: 1px 0 #fff, 2px 0 var(--line); border-bottom: 1px solid var(--line); }
.dialog.second { flex: 1; min-height: 0; overflow: hidden; }
.dialog > header { --hub: var(--deep); display: flex; align-items: center; gap: 8px; height: 24px; padding: 0 9px 0 3px; background: var(--deep); color: #fff; font-family: "Noto Sans", sans-serif; }
.dialog > header svg { width: 14px; height: 14px; }
.dialog > header button:last-child svg { width: 12px; height: 12px; }
.dialog h2 { flex: 1; font-size: 13px; }
.help { font-weight: 800; font-size: 15px; margin-right: 5px; }
.content { display: flex; gap: 4px; padding: 8px 6px 0; }
.first .content { height: 344px; padding-top: 4px; }
.pane { flex: 1; display: flex; flex-direction: column; min-width: 0; padding-top: 4px; }
.ptabs { display: flex; align-items: flex-end; padding-left: 2px; height: 29px; margin-bottom: -1px; }
.ptabs button { height: 27px; padding: 0 1px 0 8px; border: 1px solid #d0d0d0; border-bottom: 0; background: #efefef; }
.ptabs .on { height: 29px; padding: 1px 3px 3px; background: #fff; color: var(--link); border-color: #bbb; z-index: 1; }
.ptabs .on span { display: block; padding: 4px 3px; border: 1px dotted #111; }
.sheet { flex: 1; padding: 0 4px; background: #fff; border: 1px solid #bcbcbc; border-bottom: 0; }
.sheet section { padding: 4px 9px 8px; border-bottom: 1px solid #ccc; }
.sheet h3 { display: flex; align-items: center; gap: 8px; height: 20px; color: var(--link); font-family: "Noto Sans", sans-serif; margin-left: -2px; }
.sheet h3 svg { width: 10px; height: 5px; }
.sheet label { display: block; line-height: 20px; margin: 8px 0 3px 0; }
.field { display: flex; gap: 4px; margin-left: 2px; }
.field input { flex: 1; min-width: 0; height: 23px; padding: 0 6px; border: 1px solid #707070; background: #fff; }
.field button { width: 32px; height: 32px; border: 1px solid #707070; background: #fff; }
.field svg { width: 19px; height: 24px; margin: auto; }
.field .full { width: 24px; }
.info { justify-content: space-between; align-items: center; margin: 8px 0 0; }
.sheet .info label { margin: 0; }
.vscroll { display: flex; flex-direction: column; width: 16px; border-left: 1px solid #fff; }
.vscroll svg { width: 9px; height: 6px; margin: 6px auto 5px 3px; }
.vthumb { flex: 0 0 225px; background: #a6a6a6; }
.vthumb + svg { margin-top: auto; }
.second .vthumb { flex: 1; background: #cdcdcd; }
.more { display: grid; place-items: center; height: 14px; margin: 0 4px 0 2px; border-bottom: 1px solid #d0d0d0; }
.more svg { width: 10px; height: 5px; }
.dialog footer { display: flex; justify-content: flex-end; gap: 5px; padding: 8px 15px 10px; }
.dialog footer button { width: 66px; height: 23px; border: 1px solid var(--deep); color: var(--link); }
.dialog footer .primary { background: var(--deep); color: #fff; }
.second > header { height: 23px; padding: 0 9px 0 6px; }
.second .content { padding: 4px 5px 0 9px; height: 100%; }
```
